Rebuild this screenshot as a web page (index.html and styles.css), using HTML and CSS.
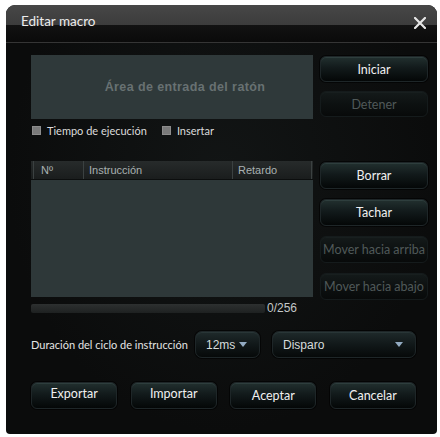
FILE: index.html
```html
<!DOCTYPE html>
<html lang="es">
<head>
<meta charset="utf-8">
<title>Editar macro</title>
<link rel="stylesheet" href="styles.css">
</head>
<body>
<div class="dialog">
  <div class="titlebar">
    <span class="title">Editar macro</span>
    <span class="close" aria-label="Cerrar">
      <svg width="12" height="12" viewBox="0 0 12 12"><path d="M1 1 L11 11 M11 1 L1 11" stroke="#e6e6e6" stroke-width="2.2" stroke-linecap="square" fill="none"/></svg>
    </span>
  </div>
  <div class="content">
    <div class="section top">
      <div class="left">
        <div class="mouse-area">Área de entrada del ratón</div>
        <div class="checks">
          <label class="check"><span class="box"></span>Tiempo de ejecución</label>
          <label class="check"><span class="box"></span>Insertar</label>
        </div>
      </div>
      <div class="right">
        <div class="btn">Iniciar</div>
        <div class="btn disabled">Detener</div>
      </div>
    </div>

    <div class="section middle">
      <div class="left">
        <div class="table">
          <div class="thead">
            <div class="th first">Nº</div>
            <div class="th">Instrucción</div>
            <div class="th">Retardo</div>
            <div class="th"></div>
          </div>
          <div class="tbody"></div>
        </div>
        <div class="progress-row">
          <div class="progress"></div>
          <span class="count">0/256</span>
        </div>
      </div>
      <div class="right list-buttons">
        <div class="btn">Borrar</div>
        <div class="btn">Tachar</div>
        <div class="btn disabled">Mover hacia arriba</div>
        <div class="btn disabled">Mover hacia abajo</div>
      </div>
    </div>

    <div class="cycle-row">
      <span class="cycle-label">Duración del ciclo de instrucción</span>
      <div class="select small"><span>12ms</span><span class="tri"></span></div>
      <div class="select wide"><span>Disparo</span><span class="tri"></span></div>
    </div>

    <div class="footer">
      <div class="btn raised">Exportar</div>
      <div class="btn raised">Importar</div>
      <div class="btn">Aceptar</div>
      <div class="btn">Cancelar</div>
    </div>
  </div>
</div>
</body>
</html>
```
FILE: styles.css
```css
html, body {
  margin: 0;
  padding: 0;
  background: #ffffff;
}
body {
  padding: 5px 3px 3px 6px;
  font-family: Lato, "Open Sans", sans-serif;
}
.dialog {
  width: 431px;
  height: 429px;
  background: radial-gradient(ellipse at 50% 40%, #121515 0%, #0b0c0c 70%);
  border-radius: 9px 9px 4px 4px;
  overflow: hidden;
  display: flex;
  flex-direction: column;
}
.titlebar {
  height: 38px;
  border-bottom: 1px solid #353535;
  background: linear-gradient(to bottom, #474747 0px, #3c3c3c 20px, #121212 20px, #0a0a0a 38px);
  display: flex;
  align-items: center;
  justify-content: space-between;
  padding: 0 11px 0 15px;
  box-sizing: border-box;
}
.title {
  color: #ececec;
  font-size: 13.5px;
  margin-top: -5px;
}
.close {
  display: flex;
  margin-top: -2px;
}
.content {
  padding: 12px 9px 0 25px;
  display: flex;
  flex-direction: column;
}
.section {
  display: grid;
  grid-template-columns: 282px 108px;
  column-gap: 7px;
}
.mouse-area {
  height: 64px;
  box-sizing: border-box;
  padding-left: 26px;
  background: #2f393a;
  color: #687172;
  font-family: "Liberation Sans", Arial, sans-serif;
  font-weight: bold;
  font-size: 12.5px;
  letter-spacing: 0.4px;
  display: flex;
  align-items: center;
  justify-content: center;
}
.checks {
  margin-top: 4px;
  height: 14px;
  display: flex;
  align-items: center;
  gap: 15px;
  padding-left: 1px;
}
.check {
  display: flex;
  align-items: center;
  gap: 6px;
  color: #dcdcdc;
  font-size: 11px;
}
.box {
  width: 9px;
  height: 9px;
  box-sizing: border-box;
  background: #7a7a7a;
  border: 1px solid #8c8c8c;
}
.right {
  display: flex;
  flex-direction: column;
  gap: 9px;
  padding-top: 1px;
}
.btn {
  height: 27px;
  box-sizing: border-box;
  border: 1px solid #1e2628;
  border-radius: 6px;
  background: linear-gradient(to bottom, #22302f 0%, #121a1b 45%, #040707 100%);
  box-shadow: inset 0 1px 0 rgba(140, 170, 170, 0.12), 0 0 0 1px rgba(0, 0, 0, 0.6);
  color: #f0f0f0;
  font-size: 12.5px;
  display: flex;
  align-items: center;
  justify-content: center;
  white-space: nowrap;
}
.btn.disabled {
  background: linear-gradient(to bottom, #141a1a 0%, #0d1111 50%, #080a0a 100%);
  border-color: #151b1c;
  box-shadow: inset 0 1px 0 rgba(120, 140, 140, 0.05);
  color: #505959;
}
.top .btn {
  height: 26px;
}
.middle {
  margin-top: 24px;
}
.table {
  height: 136px;
  background: #2e3839;
  display: flex;
  flex-direction: column;
}
.thead {
  height: 19px;
  display: grid;
  grid-template-columns: 52px 149px 79px 2px;
  background: linear-gradient(to bottom, #272b2b, #1a1d1d);
  border-bottom: 1px solid #0c0e0e;
  box-sizing: border-box;
}
.th {
  border-left: 1px solid #3b4141;
  color: #a9b1b1;
  font-family: "Liberation Sans", Arial, sans-serif;
  font-size: 11px;
  display: flex;
  align-items: center;
  padding-left: 5px;
}
.th.first {
  margin-left: 2px;
  padding-left: 7px;
}
.th:last-child {
  padding: 0;
}
.tbody {
  flex: 1;
}
.progress-row {
  margin-top: 5px;
  height: 12px;
  display: flex;
  align-items: center;
  gap: 2px;
}
.progress {
  width: 234px;
  height: 9px;
  border-radius: 2px;
  background: linear-gradient(to bottom, #2d3030, #1e2121);
}
.count {
  color: #c4c8c8;
  font-family: "Liberation Sans", Arial, sans-serif;
  font-size: 12px;
}
.list-buttons {
  gap: 10px;
}
.cycle-row {
  margin-top: 17px;
  height: 27px;
  display: flex;
  align-items: center;
}
.cycle-label {
  width: 164px;
  color: #e4e4e4;
  font-size: 11px;
}
.select {
  height: 27px;
  box-sizing: border-box;
  border: 1px solid #1e2628;
  border-radius: 7px;
  background: linear-gradient(to bottom, #1f2a2b 0%, #111819 50%, #060909 100%);
  box-shadow: inset 0 1px 0 rgba(140, 170, 170, 0.1), 0 0 0 1px rgba(0, 0, 0, 0.6);
  display: flex;
  align-items: center;
  justify-content: space-between;
  padding: 0 12px 0 10px;
  color: #d6dcdc;
  font-family: "Liberation Sans", Arial, sans-serif;
  font-size: 12px;
}
.select.small {
  width: 65px;
  padding-right: 12px;
}
.select.wide {
  width: 144px;
  margin-left: 12px;
}
.tri {
  width: 0;
  height: 0;
  border-left: 4px solid transparent;
  border-right: 4px solid transparent;
  border-top: 5px solid #93abc2;
}
.footer {
  margin-top: 24px;
  width: 385px;
  display: grid;
  grid-template-columns: repeat(4, 1fr);
  column-gap: 13.5px;
}
.footer .btn {
  font-size: 12.5px;
}
.footer .btn.raised {
  padding-bottom: 4px;
}
```
